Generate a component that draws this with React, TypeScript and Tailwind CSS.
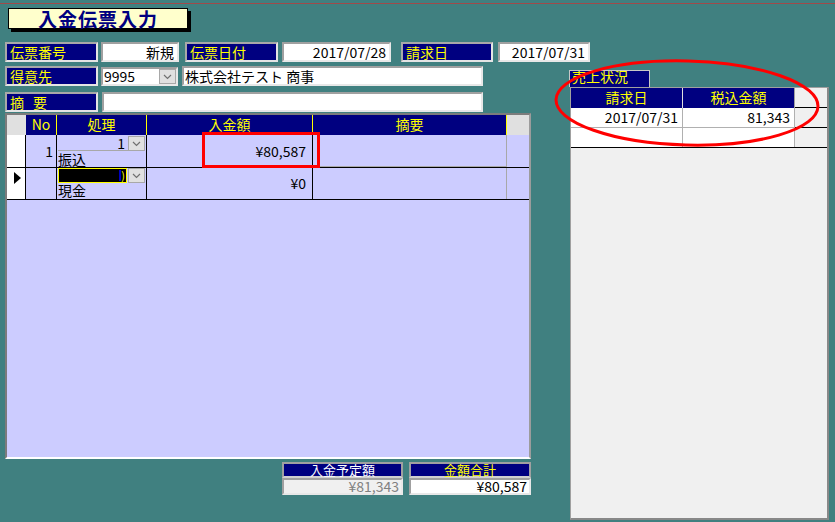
import React from "react";

const Chevron: React.FC = () => (
  <svg width="9" height="6" viewBox="0 0 9 6">
    <polyline points="1,1 4.5,4.5 8,1" fill="none" stroke="#707070" strokeWidth="1.2" />
  </svg>
);

const Label: React.FC<{ w: string; className?: string; children: React.ReactNode }> = ({
  w,
  className = "",
  children,
}) => (
  <div
    className={`${w} h-[20px] shrink-0 bg-[#000080] border-2 border-t-[#a8a8a8] border-l-[#a8a8a8] border-r-[#e4e4e4] border-b-[#e4e4e4] text-[#ffff00] leading-[16px] pl-[3px] whitespace-nowrap overflow-hidden ${className}`}
  >
    {children}
  </div>
);

const Field: React.FC<{ w: string; className?: string; children?: React.ReactNode }> = ({
  w,
  className = "",
  children,
}) => (
  <div
    className={`${w} h-[20px] shrink-0 bg-white border-2 border-t-[#a0a0a0] border-l-[#a0a0a0] border-r-[#e8e8e8] border-b-[#e8e8e8] leading-[16px] text-black whitespace-nowrap overflow-hidden ${className}`}
  >
    {children}
  </div>
);

const DropButton: React.FC = () => (
  <div className="w-[17px] h-[15px] bg-[#e0e0e0] border border-[#a8a8a8] flex items-center justify-center shrink-0">
    <Chevron />
  </div>
);

export default function App() {
  return (
    <div className="relative w-[835px] h-[522px] overflow-hidden bg-[#408080] text-[14px] font-['Noto_Sans_CJK_JP','Noto_Sans',sans-serif]">
      <div className="mt-[3px] h-px bg-[#a04a4a]" />

      {/* title */}
      <div className="ml-[8px] mt-[4px] w-[180px] h-[21px] bg-[#ffffcc] border border-black shadow-[3px_3px_0_#000] text-center text-[19px] font-bold leading-[19px] text-[#000080] tracking-[1px]">
        入金伝票入力
      </div>

      {/* row 1 */}
      <div className="flex ml-[5px] mt-[13px]">
        <Label w="w-[93px]">伝票番号</Label>
        <Field w="w-[78px]" className="ml-[3px] text-right pr-[3px]">新規</Field>
        <Label w="w-[93px]" className="ml-[6px]">伝票日付</Label>
        <Field w="w-[109px]" className="ml-[4px] text-right pr-[3px]">2017/07/28</Field>
        <Label w="w-[92px]" className="ml-[10px]">請求日</Label>
        <Field w="w-[92px]" className="ml-[5px] text-right pr-[3px]">2017/07/31</Field>
      </div>

      <div className="flex mt-[4px]">
        {/* left column */}
        <div className="ml-[5px] w-[526px] shrink-0">
          <div className="flex">
            <Label w="w-[93px]">得意先</Label>
            <div className="ml-[3px] mt-px w-[77px] h-[19px] flex bg-white border-2 border-t-[#a0a0a0] border-l-[#a0a0a0] border-r-[#e8e8e8] border-b-[#e8e8e8]">
              <div className="flex-1 leading-[15px] pl-px">9995</div>
              <DropButton />
            </div>
            <Field w="w-[301px]" className="ml-[4px] pl-[1px]">株式会社テスト 商事</Field>
          </div>
          <div className="flex mt-[6px]">
            <Label w="w-[93px]">
              摘<span className="ml-[9px]">要</span>
            </Label>
            <Field w="w-[381px]" className="ml-[4px]" />
          </div>

          {/* grid */}
          <div className="mt-px h-[346px] bg-[#ccccff] border-2 border-l-[#7c7c7c] border-t-[#7c7c7c] border-r-[#9c9c9c] border-b-white flex flex-col">
            <div className="flex h-[20px] leading-[19px] text-[#ffff00] text-center shrink-0">
              <div className="w-[19px] bg-[#e0e0e0]" />
              <div className="w-[31px] bg-[#000080] border-r border-[#ffff00]">No</div>
              <div className="w-[90px] bg-[#000080] border-r border-[#ffff00]">処理</div>
              <div className="w-[166px] bg-[#000080] border-r border-[#ffff00]">入金額</div>
              <div className="w-[194px] bg-[#000080] border-r border-[#ffff00]">摘要</div>
              <div className="flex-1 bg-[#e0e0e0]" />
            </div>

            {/* record 1 */}
            <div className="flex h-[33px] border-b border-black shrink-0">
              <div className="w-[19px] bg-white border-r border-black" />
              <div className="w-[31px] border-r border-black text-right pr-[3px] leading-[33px]">1</div>
              <div className="w-[90px] border-r border-black px-px pt-px">
                <div className="flex h-[15px] border-b border-[#a8a8a8]">
                  <div className="flex-1 text-right pr-[3px] leading-[14px]">1</div>
                  <DropButton />
                </div>
                <div className="leading-[15px] pt-px">振込</div>
              </div>
              <div className="w-[166px] border-r border-black text-right pr-[6px] leading-[33px]">¥80,587</div>
              <div className="w-[194px] border-r border-[#a8a8a8] border-b border-b-[#a8a8a8]" />
              <div className="flex-1" />
            </div>

            {/* record 2 */}
            <div className="flex h-[32px] border-b border-black shrink-0">
              <div className="w-[19px] bg-white border-r border-black pl-[7px] pt-[4px]">
                <div className="w-0 h-0 border-y-[6px] border-y-transparent border-l-[7px] border-l-black" />
              </div>
              <div className="w-[31px] border-r border-black" />
              <div className="w-[90px] border-r border-black px-px">
                <div className="flex h-[15px]">
                  <div className="flex-1 flex bg-black border border-[#ffff00] justify-end items-center">
                    <div className="w-[2px] h-[11px] bg-[#0000c0]" />
                    <div className="text-[#ffff00] text-[11px] leading-[11px] pr-px">)</div>
                  </div>
                  <div className="ml-px">
                    <DropButton />
                  </div>
                </div>
                <div className="leading-[15px]">現金</div>
              </div>
              <div className="w-[166px] border-r border-black text-right pr-[6px] leading-[31px]">¥0</div>
              <div className="w-[194px] border-r border-[#a8a8a8]" />
              <div className="flex-1" />
            </div>
            <div className="flex-1" />
          </div>

          {/* totals */}
          <div className="flex ml-[277px] mt-[3px]">
            <div className="w-[121px]">
              <div className="h-[16px] bg-[#000080] border-2 border-t-[#a0a0a0] border-l-[#a0a0a0] border-r-[#a0a0a0] border-b-[#d0d0d0] text-center text-white text-[13px] leading-[12px]">
                入金予定額
              </div>
              <div className="h-[17px] bg-[#f0f0f0] border-2 border-t-[#a0a0a0] border-l-[#a0a0a0] border-r-[#e8e8e8] border-b-[#e8e8e8] text-right pr-[2px] text-[#808080] leading-[13px]">
                ¥81,343
              </div>
            </div>
            <div className="w-[122px] ml-[6px]">
              <div className="h-[16px] bg-[#000080] border-2 border-t-[#a0a0a0] border-l-[#a0a0a0] border-r-[#a0a0a0] border-b-[#d0d0d0] text-center text-[#ffff00] text-[13px] leading-[12px]">
                金額合計
              </div>
              <div className="h-[17px] bg-white border-2 border-t-[#a0a0a0] border-l-[#a0a0a0] border-r-[#e8e8e8] border-b-[#e8e8e8] text-right pr-[2px] text-black leading-[13px]">
                ¥80,587
              </div>
            </div>
          </div>
        </div>

        {/* right column */}
        <div className="ml-[38px] mt-[4px] w-[260px] shrink-0">
          <div className="w-[81px] h-[17px] bg-[#000080] border border-b-0 border-[#c8c8c8] overflow-hidden text-[#ffff00] pl-[2px] leading-[14px]">
            <div className="-mt-[2px]">売上状況</div>
          </div>
          <div className="ml-px w-[259px] h-[433px] bg-[#f0f0f0] border-l border-t border-[#a0a0a0] border-r-2 border-b-2 border-r-[#888888] border-b-[#888888]">
            <div className="flex h-[20px] text-center text-[#ffff00] leading-[19px]">
              <div className="w-[112px] bg-[#000080] border-r border-[#e0e0e0]">請求日</div>
              <div className="w-[112px] bg-[#000080] border-r border-[#a0a0a0]">税込金額</div>
              <div className="flex-1 border-b border-black" />
            </div>
            <div className="flex h-[20px] leading-[19px]">
              <div className="w-[112px] bg-white border-r border-b border-[#b0b0b0] text-right pr-[4px]">2017/07/31</div>
              <div className="w-[112px] bg-white border-r border-b border-[#b0b0b0] text-right pr-[4px]">81,343</div>
              <div className="flex-1 border-b border-black" />
            </div>
            <div className="flex h-[20px] border-b border-black">
              <div className="w-[112px] bg-white border-r border-[#b0b0b0]" />
              <div className="w-[112px] bg-white border-r border-[#b0b0b0]" />
              <div className="flex-1" />
            </div>
          </div>
        </div>
      </div>

      {/* annotations */}
      <div className="absolute left-[202px] top-[132px] w-[118px] h-[36px] border-[3px] border-[#ff0000]" />
      <svg className="absolute left-0 top-0 pointer-events-none" width="835" height="522">
        <ellipse
          cx="687"
          cy="103"
          rx="131"
          ry="42"
          fill="none"
          stroke="#ff0000"
          strokeWidth="3"
          transform="rotate(1.5 687 103)"
        />
      </svg>
    </div>
  );
}
